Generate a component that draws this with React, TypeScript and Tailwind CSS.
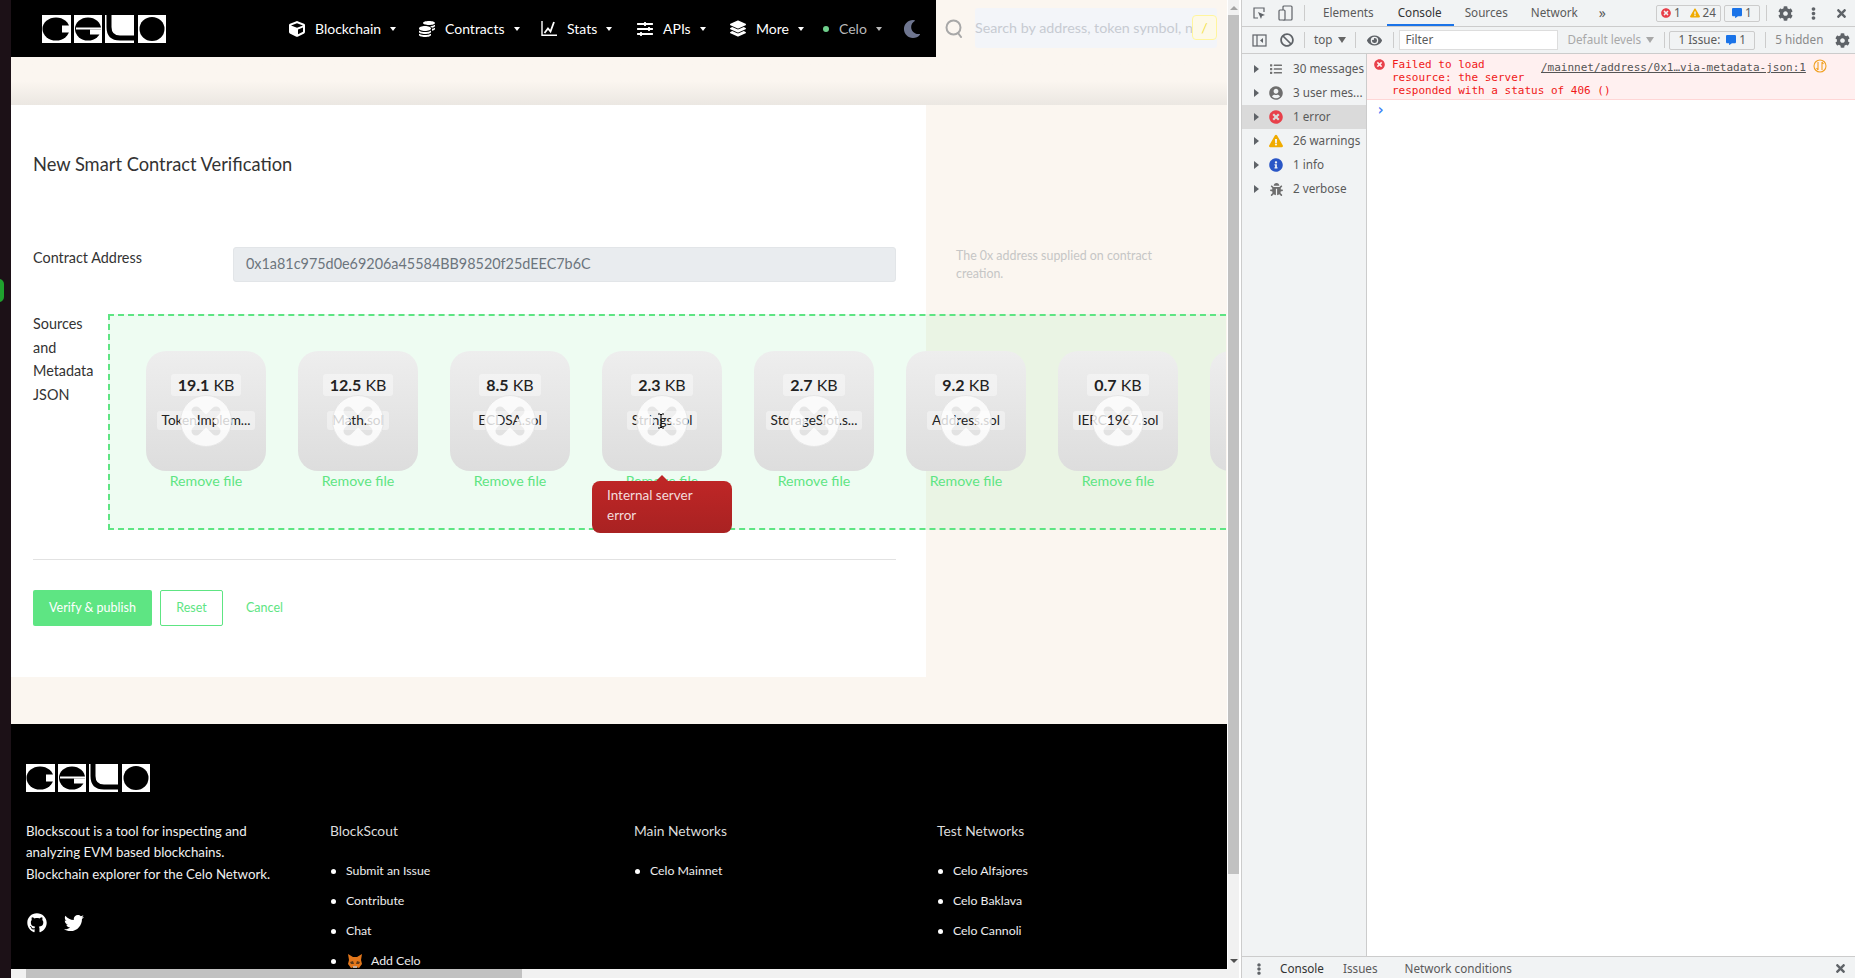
import React from "react";
import { FaGithub, FaTwitter, FaCube, FaCoins, FaSlidersH, FaLayerGroup, FaMoon, FaCog, FaBug, FaExclamationTriangle, FaInfoCircle, FaTimesCircle, FaUserCircle, FaList, FaEye, FaBan, FaEllipsisV, FaTimes, FaCommentAlt } from "react-icons/fa";

const Logo = () => (
  <svg width="124" height="28" viewBox="0 0 124 28" className="block">
    <rect x="0" y="0" width="29" height="28" fill="#fff" />
    <ellipse cx="14" cy="14" rx="13.5" ry="11.5" fill="#000" />
    <rect x="20" y="10.5" width="9" height="7" fill="#fff" />
    <rect x="32" y="0" width="28" height="28" fill="#fff" />
    <ellipse cx="46" cy="14" rx="13" ry="11.5" fill="#000" />
    <rect x="34" y="12.5" width="26" height="2" fill="#fff" />
    <rect x="48" y="14.5" width="12" height="5" fill="#fff" />
    <rect x="63" y="0" width="29" height="28" fill="#fff" />
    <path d="M67 0v12q0 11 11 11h14" fill="none" stroke="#000" strokeWidth="5" />
    <rect x="96" y="0" width="28" height="28" fill="#fff" />
    <ellipse cx="110" cy="14" rx="12.5" ry="12" fill="#000" />
  </svg>
);

const Caret = () => <span className="ml-[9px] h-0 w-0 border-x-[3px] border-t-[4px] border-x-transparent border-t-current" />;

const NavItem = ({ icon, label, width }: { icon: React.ReactNode; label: string; width: string }) => (
  <div className={`flex items-center text-white ${width}`}>
    <span className="flex w-[16px] justify-center">{icon}</span>
    <span className="ml-[10px]">{label}</span>
    <Caret />
  </div>
);

const StatsIcon = () => (
  <svg width="16" height="17" viewBox="0 0 16 17" fill="none" stroke="#fff" strokeWidth="1.4">
    <path d="M1 1v14.3h15" />
    <path d="M3.5 13L7 8.5l2.5 3L13 2" strokeWidth="1.8" />
  </svg>
);

const XMark = () => (
  <svg width="52" height="52" viewBox="0 0 52 52" className="absolute left-[34px] top-[44px]">
    <mask id="xcut">
      <circle cx="26" cy="26" r="26" fill="#fff" />
      <path d="M16 16 L36 36 M36 16 L16 36" stroke="#000" strokeWidth="9" strokeLinecap="round" />
    </mask>
    <circle cx="26" cy="26" r="26" fill="#fff" fillOpacity="0.8" mask="url(#xcut)" />
    <circle cx="26" cy="26" r="25.5" fill="none" stroke="#d8d8d8" strokeOpacity="0.6" />
  </svg>
);

const files = [
  ["19.1", "TokenImplem..."],
  ["12.5", "Math.sol"],
  ["8.5", "ECDSA.sol"],
  ["2.3", "Strings.sol"],
  ["2.7", "StorageSlot.s..."],
  ["9.2", "Address.sol"],
  ["0.7", "IERC1967.sol"],
  ["", ""],
];

const FileCard = ({ size, name }: { size: string; name: string }) => (
  <div className="w-[120px] shrink-0">
    <div className="relative h-[120px] rounded-[20px] bg-gradient-to-b from-[#eeeeee] to-[#dddddd]">
      <div className="absolute left-0 right-0 top-[23px] flex justify-center">
        {size && <span className="rounded-[3px] bg-white/40 px-[7px] text-[16px] leading-[22px] text-[#222]"><b>{size}</b> KB</span>}
      </div>
      <div className="absolute left-0 right-0 top-[60px] flex justify-center">
        {name && <span className="whitespace-nowrap rounded-[3px] bg-white/40 px-[5px] text-[13.6px] leading-[19px] text-[#222]">{name}</span>}
      </div>
      {size && <XMark />}
    </div>
    {size && <div className="text-center text-[14.2px] leading-[19px] text-[#5ee583]">Remove file</div>}
  </div>
);

const FooterList = ({ title, items, width }: { title: string; items: React.ReactNode[]; width: string }) => (
  <div className={width}>
    <div className="text-[13.8px] leading-[21px] text-[#dcdcdc]">{title}</div>
    <ul className="mt-[15px]">
      {items.map((it, i) => (
        <li key={i} className="flex h-[30px] items-center text-[12.3px] text-[#eeeeee]">
          <span className="mr-[10px] ml-[1px] h-[5px] w-[5px] rounded-full bg-white" />
          {it}
        </li>
      ))}
    </ul>
  </div>
);

const Fox = () => (
  <svg width="16" height="16" viewBox="0 0 16 16" className="mr-[8px] ml-[1px]">
    <path d="M1 1l5 3h4l5-3-1 6 1 4-3 4-3-1H7l-3 1-3-4 1-4z" fill="#e2761b" />
    <path d="M3 9l3-1 1 3H4zM13 9l-3-1-1 3h3z" fill="#5c3a1a" />
    <path d="M6 13h4v2H6z" fill="#c0ad9e" />
  </svg>
);

const Sep = ({ className = "" }: { className?: string }) => <span className={`h-[16px] w-px shrink-0 bg-[#cccccc] ${className}`} />;

const DevIcon = ({ children }: { children: React.ReactNode }) => <span className="flex w-[16px] justify-center">{children}</span>;

const sideRows: [React.ReactNode, string, boolean][] = [
  [<FaList className="text-[#727272]" size={12} />, "30 messages", false],
  [<FaUserCircle className="text-[#6e6e6e]" size={14} />, "3 user mes...", false],
  [<FaTimesCircle className="text-[#e8404a]" size={14} />, "1 error", true],
  [<FaExclamationTriangle className="text-[#f0ab00]" size={14} />, "26 warnings", false],
  [<FaInfoCircle className="text-[#2a56c6]" size={14} />, "1 info", false],
  [<FaBug className="text-[#6e6e6e]" size={13} />, "2 verbose", false],
];

export default function App() {
  return (
    <div className="flex h-[978px] w-[1855px] overflow-hidden bg-white font-['Lato','Noto_Sans',sans-serif]">
      {/* desktop strip */}
      <div className="relative w-[11px] shrink-0 overflow-hidden bg-[#1c1117]">
        <div className="absolute left-[-6px] top-[279px] h-[23px] w-[10px] rounded-full bg-[#1fa12e]" />
      </div>

      {/* browser page */}
      <div className="flex w-[1228px] shrink-0 flex-col">
        <div className="flex h-[969px] min-h-0">
          <div className="relative w-[1216px] shrink-0 overflow-hidden bg-[#fbf6f0]">
            {/* header */}
            <div className="flex h-[57px] items-center">
              <div className="flex h-[57px] w-[925px] shrink-0 items-center bg-black text-[14px]">
                <div className="ml-[31px] mr-[123px] shrink-0"><Logo /></div>
                <NavItem width="w-[130px]" icon={<FaCube size={16} />} label="Blockchain" />
                <NavItem width="w-[122px]" icon={<FaCoins size={16} />} label="Contracts" />
                <NavItem width="w-[96px]" icon={<StatsIcon />} label="Stats" />
                <NavItem width="w-[93px]" icon={<FaSlidersH size={16} />} label="APIs" />
                <NavItem width="w-[93px]" icon={<FaLayerGroup size={17} />} label="More" />
                <div className="flex w-[80px] items-center text-[#b9b9b9]">
                  <span className="h-[6px] w-[6px] rounded-full bg-[#6fd08c]" />
                  <span className="ml-[10px]">Celo</span>
                  <Caret />
                </div>
                <FaMoon size={18} className="text-[#6f7690]" />
              </div>
              <div className="flex h-[57px] flex-1 items-center pl-[9px] pr-[10px]">
                <svg width="18" height="19" viewBox="0 0 18 19" fill="none" stroke="#a8a8a8" strokeWidth="2" className="mr-[12px] shrink-0">
                  <circle cx="8.5" cy="8.5" r="7" />
                  <path d="M13 14l3 4" strokeLinecap="round" />
                </svg>
                <div className="mb-[2px] flex h-[40px] flex-1 items-center overflow-hidden rounded-[3px] bg-[#f3f5f9] text-[14.3px] text-[#c7cbd2]">
                  <span className="w-[217px] shrink-0 overflow-hidden whitespace-nowrap">Search by address, token symbol, name, transaction hash, or block number</span>
                  <span className="flex h-[25px] w-[25px] shrink-0 items-center justify-center rounded-[4px] border border-[#fff59e] bg-[#fdf9e8] text-[#f3e24d]">/</span>
                </div>
              </div>
            </div>

            {/* shadow band */}
            <div className="h-[48px] bg-gradient-to-b from-[#fbf6f0] via-[#fbf6f0] to-[#ebe7e2]" />

            {/* card */}
            <div className="relative flex h-[572px] bg-white">
              <div className="w-[915px] shrink-0 pl-[22px] pr-[30px]">
                <div className="pt-[46px] text-[18.3px] leading-[27px] text-[#333]">New Smart Contract Verification</div>
                <div className="mt-[69px] flex">
                  <div className="w-[200px] text-[14.4px] leading-[21px] text-[#333]">Contract Address</div>
                  <div className="flex h-[35px] w-[663px] items-center rounded-[3px] border border-[#e2e5e8] bg-[#e9ecef] pb-[1px] pl-[12px] text-[14.4px] text-[#6c757d]">0x1a81c975d0e69206a45584BB98520f25dEEC7b6C</div>
                </div>
                <div className="mt-[30px] h-[217px] w-[75px] text-[14.4px] leading-[23.7px] text-[#333]">
                  Sources<br />and<br />Metadata<br />JSON
                </div>
                <div className="mt-[30px] h-px w-[863px] bg-[#e2e2e2]" />
                <div className="mt-[30px] flex items-center text-[12.5px]">
                  <span className="flex h-[36px] w-[119px] items-center justify-center rounded-[2px] bg-[#5ee583] text-white">Verify &amp; publish</span>
                  <span className="ml-[8px] flex h-[36px] w-[63px] items-center justify-center rounded-[2px] border border-[#5ee583] text-[#5ee583]">Reset</span>
                  <span className="ml-[23px] text-[#5ee583]">Cancel</span>
                </div>
              </div>
              <div className="flex-1 bg-[#fbf6f0] pl-[30px] pt-[142px] text-[12.4px] leading-[18px] text-[#c6c6c6]">
                <div className="w-[215px]">The 0x address supplied on contract creation.</div>
              </div>

              {/* dropzone overlays the two form columns */}
              <div className="absolute left-[97px] top-[209px] flex h-[216px] w-[1118px] gap-[32px] overflow-hidden border-y-2 border-l-2 border-dashed border-[#5ee583] bg-[#55e17d]/10 pl-[36px] pt-[35px]">
                {files.map((f, i) => <FileCard key={i} size={f[0]} name={f[1]} />)}
              </div>

              {/* error tooltip */}
              <div className="absolute left-[581px] top-[376px] h-[52px] w-[140px] rounded-[8px] bg-gradient-to-b from-[#be2626] to-[#a92222] px-[15px] pt-[4px] text-[13.5px] leading-[20px] text-[#f4dcdc]">
                <span className="absolute left-[64px] top-[-6px] h-0 w-0 border-x-[6px] border-b-[6px] border-x-transparent border-b-[#be2626]" />
                Internal server<br />error
              </div>
              {/* text cursor */}
              <svg width="8" height="16" viewBox="0 0 8 16" className="absolute left-[646px] top-[308px]">
                <path d="M1 1h2l1 1 1-1h2M4 2v12M1 15h2l1-1 1 1h2" stroke="#000" strokeWidth="1" fill="none" />
              </svg>
            </div>

            {/* gap */}
            <div className="h-[47px]" />

            {/* footer */}
            <div className="flex h-[245px] overflow-hidden bg-black pl-[15px] pt-[40px]">
              <div className="w-[304px] shrink-0">
                <Logo />
                <div className="mt-[29px] text-[13.3px] leading-[21.3px] text-[#f0f0f0]">
                  Blockscout is a tool for inspecting and<br />analyzing EVM based blockchains.<br />Blockchain explorer for the Celo Network.
                </div>
                <div className="mt-[28px] flex items-center gap-[17px] pl-[1px] text-white">
                  <FaGithub size={20} />
                  <FaTwitter size={20} />
                </div>
              </div>
              <div className="pt-[56px]">
                <div className="flex">
                  <FooterList width="w-[304px]" title="BlockScout" items={["Submit an Issue", "Contribute", "Chat", <span className="flex items-center"><Fox />Add Celo</span>]} />
                  <FooterList width="w-[303px]" title="Main Networks" items={["Celo Mainnet"]} />
                  <FooterList width="w-[280px]" title="Test Networks" items={["Celo Alfajores", "Celo Baklava", "Celo Cannoli"]} />
                </div>
              </div>
            </div>
          </div>

          <div className="w-px shrink-0 bg-white" />

          {/* vertical scrollbar */}
          <div className="flex w-[11px] shrink-0 flex-col items-stretch bg-[#f1f1f1]">
            <div className="flex h-[15px] justify-center pt-[6px]"><span className="h-0 w-0 border-x-[4px] border-b-[4px] border-x-transparent border-b-[#a3a3a3]" /></div>
            <div className="h-[859px] bg-[#c1c1c1]" />
            <div className="flex-1" />
            <div className="flex h-[15px] justify-center pt-[5px]"><span className="h-0 w-0 border-x-[4px] border-t-[4px] border-x-transparent border-t-[#505050]" /></div>
          </div>
        </div>
        {/* horizontal scrollbar */}
        <div className="flex h-[9px] items-stretch bg-[#f1f1f1]">
          <div className="w-[15px]" />
          <div className="w-[496px] bg-[#c1c1c1]" />
        </div>
      </div>

      <div className="w-[2px] shrink-0 bg-white" />

      {/* devtools */}
      <div className="flex min-w-0 flex-1 flex-col border-l border-[#cccccc] bg-white font-['Noto_Sans',sans-serif] text-[11.7px] text-[#5a5a5a]">
        <div className="flex h-[27px] shrink-0 items-center border-b border-[#cccccc] bg-[#f1f3f4] pl-[9px]">
          <DevIcon>
            <svg width="15" height="15" viewBox="0 0 15 15" fill="none" stroke="#5f6368" strokeWidth="1.2"><path d="M6 12H2V2h10v4" /><path d="M6 6l7 3-3 1-1 3z" fill="#5f6368" stroke="none" /></svg>
          </DevIcon>
          <span className="ml-[11px]">
            <svg width="16" height="16" viewBox="0 0 16 16" fill="none" stroke="#5f6368" strokeWidth="1.2" className="block"><rect x="5" y="1" width="9" height="14" rx="1" /><rect x="1" y="5" width="6" height="10" rx="1" fill="#f1f3f4" /></svg>
          </span>
          <Sep className="ml-[10px]" />
          <span className="ml-[18px]">Elements</span>
          <span className="relative ml-[24px] text-[#333]">Console<span className="absolute left-[-11px] right-[-12px] top-[20px] h-[2px] bg-[#1a73e8]" /></span>
          <span className="ml-[23px]">Sources</span>
          <span className="ml-[23px]">Network</span>
          <span className="ml-[21px] text-[14px] leading-none">»</span>
          <span className="ml-[50px] flex h-[17px] w-[65px] shrink-0 items-center justify-center gap-[3px] rounded-[2px] border border-[#cccccc]">
            <FaTimesCircle size={10} className="text-[#e8404a]" />1
            <FaExclamationTriangle size={10} className="ml-[6px] text-[#f0ab00]" />24
          </span>
          <span className="ml-[3px] flex h-[17px] w-[36px] shrink-0 items-center justify-center gap-[3px] rounded-[2px] border border-[#cccccc]">
            <FaCommentAlt size={10} className="text-[#1a73e8]" />1
          </span>
          <Sep className="ml-[6px]" />
          <FaCog size={15} className="ml-[11px] shrink-0 text-[#5f6368]" />
          <FaEllipsisV size={13} className="ml-[14px] shrink-0 text-[#5f6368]" />
          <FaTimes size={13} className="ml-[15px] shrink-0 text-[#5f6368]" />
        </div>
        <div className="flex h-[27px] shrink-0 items-center border-b border-[#cccccc] bg-[#f1f3f4] pl-[9px]">
          <DevIcon>
            <svg width="15" height="15" viewBox="0 0 15 15" fill="none" stroke="#5f6368" strokeWidth="1.2"><rect x="1" y="2" width="13" height="11" /><path d="M5 2v11" /><path d="M11 5v5L8 7.5z" fill="#5f6368" stroke="none" /></svg>
          </DevIcon>
          <FaBan size={14} className="ml-[13px] text-[#5f6368]" />
          <Sep className="ml-[10px]" />
          <span className="ml-[9px]">top</span>
          <span className="ml-[6px] h-0 w-0 border-x-[4px] border-t-[6px] border-x-transparent border-t-[#666]" />
          <Sep className="ml-[9px]" />
          <FaEye size={15} className="ml-[11px] text-[#5f6368]" />
          <Sep className="ml-[11px]" />
          <span className="ml-[5px] flex h-[20px] w-[159px] shrink-0 items-center border border-[#dddddd] bg-white pl-[5px]">Filter</span>
          <span className="ml-[9px] text-[#a8a8a8]">Default levels</span>
          <span className="ml-[5px] h-0 w-0 border-x-[4px] border-t-[6px] border-x-transparent border-t-[#a8a8a8]" />
          <Sep className="ml-[10px]" />
          <span className="ml-[4px] flex h-[19px] w-[86px] shrink-0 items-center justify-center gap-[3px] rounded-[2px] border border-[#cccccc]">1 Issue: <FaCommentAlt size={10} className="ml-[3px] text-[#1a73e8]" />1</span>
          <Sep className="ml-[10px]" />
          <span className="ml-[9px] text-[#8a8a8a]">5 hidden</span>
          <FaCog size={15} className="ml-[12px] shrink-0 text-[#5f6368]" />
        </div>
        <div className="flex min-h-0 flex-1">
          <div className="w-[125px] shrink-0 border-r border-[#cccccc] bg-[#f1f3f4] pt-[3px]">
            {sideRows.map(([icon, label, sel], i) => (
              <div key={i} className={`flex h-[24px] items-center pl-[12px] ${sel ? "bg-[#dadada]" : ""}`}>
                <span className="h-0 w-0 border-y-[4px] border-l-[5px] border-y-transparent border-l-[#5f6368]" />
                <span className="ml-[9px] flex w-[16px] justify-center">{icon}</span>
                <span className="ml-[9px] whitespace-nowrap">{label}</span>
              </div>
            ))}
          </div>
          <div className="min-w-0 flex-1">
            <div className="relative h-[46px] border-b border-[#ffd6d6] bg-[#fff0f0] pl-[25px] pt-[4px] font-['DejaVu_Sans_Mono',monospace] text-[11px] leading-[13px] text-[#f01818]">
              <FaTimesCircle size={11} className="absolute left-[7px] top-[5px] text-[#e8404a]" />
              Failed to load<br />resource: the server<br />responded with a status of 406 ()
              <span className="absolute left-[174px] top-[7px] whitespace-nowrap text-[#555] underline">/mainnet/address/0x1…via-metadata-json:1</span>
              <svg width="14" height="14" viewBox="0 0 14 14" fill="none" stroke="#f0a020" strokeWidth="1.1" className="absolute left-[446px] top-[5px]"><circle cx="7" cy="7" r="6" /><path d="M5 3v8M5 11L3.5 9M9 11V3M9 3l1.5 2" /></svg>
            </div>
            <div className="pl-[9px] pt-[1px] font-['DejaVu_Sans_Mono',monospace] text-[15px] font-bold leading-[18px] text-[#3b82f6]">›</div>
          </div>
        </div>
        <div className="flex h-[22px] shrink-0 items-center border-t border-[#cccccc] bg-[#f1f3f4] pl-[11px] pt-[2px]">
          <FaEllipsisV size={12} className="text-[#5f6368]" />
          <span className="ml-[15px] text-[#333]">Console</span>
          <span className="ml-[19px]">Issues</span>
          <span className="ml-[27px]">Network conditions</span>
          <FaTimes size={13} className="ml-auto mr-[8px] text-[#5f6368]" />
        </div>
      </div>
    </div>
  );
}
